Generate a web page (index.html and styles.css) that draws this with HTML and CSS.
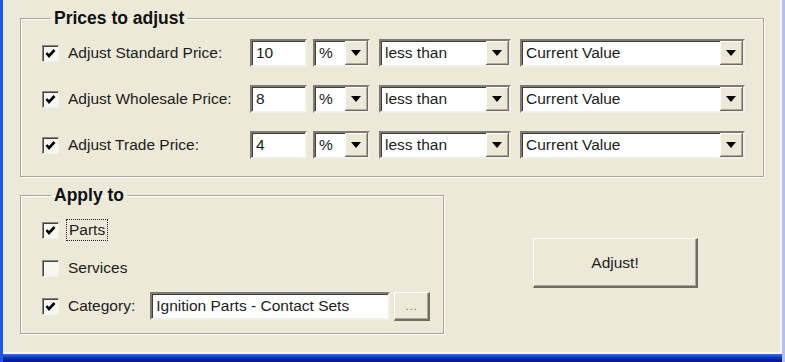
FILE: index.html
```html
<!DOCTYPE html>
<html lang="en">
<head>
  <meta charset="UTF-8">
  <meta name="viewport" content="width=device-width, initial-scale=1.0">
  <title>Adjust Prices</title>
  <link rel="stylesheet" href="styles.css">
</head>
<body>
  <div class="window">
    <div class="client">
      <fieldset class="group prices">
        <legend>Prices to adjust</legend>

        <div class="price-row">
          <label class="check">
            <span class="box"><svg viewBox="0 0 15 15"><polyline points="3.5,7 6,10 11.5,4"/></svg></span>
            Adjust Standard Price:
          </label>
          <input class="field amount" type="text" value="10">
          <div class="combo unit"><span class="value">%</span><span class="drop"></span></div>
          <div class="combo compare"><span class="value">less than</span><span class="drop"></span></div>
          <div class="combo basis"><span class="value">Current Value</span><span class="drop"></span></div>
        </div>

        <div class="price-row">
          <label class="check">
            <span class="box"><svg viewBox="0 0 15 15"><polyline points="3.5,7 6,10 11.5,4"/></svg></span>
            Adjust Wholesale Price:
          </label>
          <input class="field amount" type="text" value="8">
          <div class="combo unit"><span class="value">%</span><span class="drop"></span></div>
          <div class="combo compare"><span class="value">less than</span><span class="drop"></span></div>
          <div class="combo basis"><span class="value">Current Value</span><span class="drop"></span></div>
        </div>

        <div class="price-row">
          <label class="check">
            <span class="box"><svg viewBox="0 0 15 15"><polyline points="3.5,7 6,10 11.5,4"/></svg></span>
            Adjust Trade Price:
          </label>
          <input class="field amount" type="text" value="4">
          <div class="combo unit"><span class="value">%</span><span class="drop"></span></div>
          <div class="combo compare"><span class="value">less than</span><span class="drop"></span></div>
          <div class="combo basis"><span class="value">Current Value</span><span class="drop"></span></div>
        </div>
      </fieldset>

      <div class="lower">
        <fieldset class="group apply">
          <legend>Apply to</legend>

          <div class="apply-row">
            <label class="check">
              <span class="box"><svg viewBox="0 0 15 15"><polyline points="3.5,7 6,10 11.5,4"/></svg></span>
              <span class="focus">Parts</span>
            </label>
          </div>

          <div class="apply-row">
            <label class="check">
              <span class="box"></span>
              Services
            </label>
          </div>

          <div class="apply-row">
            <label class="check">
              <span class="box"><svg viewBox="0 0 15 15"><polyline points="3.5,7 6,10 11.5,4"/></svg></span>
              Category:
            </label>
            <input class="field category" type="text" value="Ignition Parts - Contact Sets">
            <button type="button" class="browse-btn">...</button>
          </div>
        </fieldset>

        <button type="button" class="adjust-btn">Adjust!</button>
      </div>
    </div>
    <div class="frame-bottom"></div>
  </div>
</body>
</html>
```

FILE: styles.css
```css
/* Global Styles */
* {
  margin: 0;
  padding: 0;
  box-sizing: border-box;
}

body {
  width: 785px;
  height: 362px;
  overflow: hidden;
  background-color: #ece9d8;
  font-family: "Liberation Sans", Arial, sans-serif;
  font-size: 15.5px;
  color: #1c1c1c;
}

/* Window frame */
.window {
  height: 362px;
  display: flex;
  flex-direction: column;
  border-left: 3px solid #1f56e0;
  border-right: 3px solid #b3c1ea;
}

.client {
  flex: 1;
  padding: 8px 0 0 17px;
  border-bottom: 2px solid #f8f7ef;
  border-right: 2px solid #f8f7ef;
}

.frame-bottom {
  height: 8px;
  background: linear-gradient(#3a6cf0, #0b34c4 45%, #00187e);
}

/* Group boxes */
.group {
  border: 1px solid #a8a699;
  box-shadow: inset 1px 1px 0 #fff, 1px 1px 0 #fff;
}

.group legend {
  margin-left: 9px;
  padding: 0 3px;
  font-size: 17.5px;
  font-weight: bold;
  line-height: 20px;
  color: #111;
}

.prices {
  width: 744px;
  padding: 11px 0 17px 21px;
  display: flex;
  flex-direction: column;
  gap: 18px;
}

.price-row {
  display: flex;
  align-items: center;
  height: 28px;
}

.price-row .check {
  width: 208px;
}

/* Checkboxes */
.check {
  display: flex;
  align-items: center;
  gap: 9px;
  white-space: nowrap;
}

.box {
  width: 17px;
  height: 17px;
  flex: none;
  background: #f7f6f1;
  border-top: 1px solid #8a887e;
  border-left: 1px solid #8a887e;
  border-right: 1px solid #f3f2ea;
  border-bottom: 1px solid #f3f2ea;
  box-shadow: inset 1px 1px 0 #45443f;
}

.box svg {
  display: block;
  width: 15px;
  height: 15px;
}

.box polyline {
  fill: none;
  stroke: #000;
  stroke-width: 2.6;
}

.focus {
  outline: 1px dotted #222;
  outline-offset: 1px;
  padding: 0 1px;
}

/* Sunken fields */
.field,
.combo {
  height: 28px;
  background: #fff;
  border-top: 2px solid #7d7b72;
  border-left: 2px solid #7d7b72;
  border-right: 2px solid #f0efe8;
  border-bottom: 2px solid #f0efe8;
  box-shadow: inset 1px 1px 0 #3f3e3a;
  font: inherit;
  color: #1c1c1c;
}

.field {
  padding-left: 4px;
  outline: none;
}

.amount {
  width: 57px;
}

.combo {
  display: flex;
  align-items: center;
}

.combo .value {
  flex: 1;
  padding-left: 4px;
}

.unit {
  width: 57px;
  margin-left: 6px;
}

.compare {
  width: 132px;
  margin-left: 9px;
}

.basis {
  width: 225px;
  margin-left: 9px;
}

.drop {
  width: 23px;
  height: 24px;
  flex: none;
  display: flex;
  align-items: center;
  justify-content: center;
  background: #ece9d8;
  border-right: 1px solid #6f6d63;
  border-bottom: 1px solid #6f6d63;
  box-shadow: inset 1px 1px 0 #fff, inset -1px -1px 0 #aca899;
}

.drop::after {
  content: "";
  border-left: 5px solid transparent;
  border-right: 5px solid transparent;
  border-top: 6px solid #000;
}

/* Lower area */
.lower {
  display: flex;
  align-items: flex-start;
  margin-top: 8px;
}

.apply {
  width: 424px;
  padding: 11px 0 13px 21px;
  display: flex;
  flex-direction: column;
  gap: 10px;
}

.apply-row {
  display: flex;
  align-items: center;
  height: 28px;
}

.category {
  width: 240px;
  margin-left: 15px;
}

/* Buttons */
.browse-btn,
.adjust-btn {
  font: inherit;
  color: #1c1c1c;
  background: #ece9d8;
  border-top: 1px solid #fff;
  border-left: 1px solid #fff;
  border-right: 2px solid #6f6d63;
  border-bottom: 2px solid #6f6d63;
  box-shadow: inset -1px -1px 0 #aca899;
  cursor: pointer;
}

.browse-btn {
  width: 36px;
  height: 29px;
  margin-left: 4px;
  font-size: 11px;
  color: #666;
  letter-spacing: 1px;
}

.adjust-btn {
  width: 165px;
  height: 50px;
  margin-left: 89px;
  margin-top: 53px;
}
```
